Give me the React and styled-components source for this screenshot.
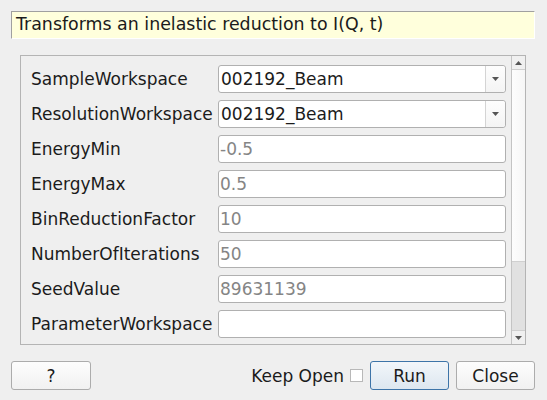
import React from "react";
import styled, { createGlobalStyle } from "styled-components";

const Global = createGlobalStyle`
  html, body { margin: 0; padding: 0; background: #efefef; }
  body { font-family: "DejaVu Sans", "Liberation Sans", sans-serif; font-size: 17px; color: #1b1b1b; }
`;

const Window = styled.div`
  width: 547px;
  height: 400px;
  box-sizing: border-box;
  padding: 11px 12px 0 11px;
  display: flex;
  flex-direction: column;
  background: #efefef;
  overflow: hidden;
`;

const Description = styled.div`
  height: 28px;
  box-sizing: border-box;
  background: #ffffdc;
  border-top: 1px solid #a0a0a0;
  border-left: 1px solid #a0a0a0;
  border-right: 1px solid #ffffff;
  border-bottom: 1px solid #ffffff;
  padding: 0 4px;
  display: flex;
  align-items: center;
  line-height: 1;
  font-size: 17.4px;
  white-space: nowrap;
`;

const Frame = styled.div`
  margin: 16px 9px 0 9px;
  height: 290px;
  box-sizing: border-box;
  border: 1px solid #b4b4b4;
  display: flex;
`;

const Content = styled.div`
  flex: 1;
  padding: 9px 5px 0 10px;
  display: grid;
  grid-template-columns: 181px 1fr;
  column-gap: 6px;
  row-gap: 7px;
  align-content: start;
`;

const Label = styled.div`
  height: 28px;
  display: flex;
  align-items: center;
  white-space: nowrap;
`;

const TextInput = styled.div`
  height: 28px;
  box-sizing: border-box;
  background: #fff;
  border: 1px solid #b0b0b0;
  border-radius: 3px;
  padding: 0 2px 0 1px;
  display: flex;
  align-items: center;
  color: ${(p) => (p.$muted ? "#858585" : "#1b1b1b")};
`;

const Combo = styled.div`
  height: 28px;
  box-sizing: border-box;
  background: #fff;
  border: 1px solid #b0b0b0;
  border-radius: 3px;
  display: flex;
  align-items: stretch;
`;

const ComboText = styled.div`
  flex: 1;
  display: flex;
  align-items: center;
  padding-left: 2px;
`;

const ComboArrow = styled.div`
  width: 19px;
  border-left: 1px solid #d4d4d4;
  display: flex;
  align-items: center;
  justify-content: center;
  background: linear-gradient(#fdfdfd, #f4f4f4);
  border-radius: 0 3px 3px 0;
`;

const Scrollbar = styled.div`
  width: 13px;
  border-left: 1px solid #c4c4c4;
  display: flex;
  flex-direction: column;
  background: #e1e1e1;
`;

const ScrollButton = styled.div`
  height: 13px;
  background: #f0f0f0;
  display: flex;
  align-items: center;
  justify-content: center;
  border-${(p) => (p.$up ? "bottom" : "top")}: 1px solid #cfcfcf;
`;

const ScrollHandle = styled.div`
  height: 191px;
  background: linear-gradient(90deg, #fdfdfd, #f6f6f6);
  border-bottom: 1px solid #d0d0d0;
`;

const ScrollGroove = styled.div`
  flex: 1;
`;

const Footer = styled.div`
  margin-top: 16px;
  display: flex;
  align-items: center;
`;

const Button = styled.div`
  width: ${(p) => p.$w}px;
  height: 29px;
  box-sizing: border-box;
  border: 1px solid ${(p) => (p.$focus ? "#3d74a8" : "#acacac")};
  border-radius: 3px;
  background: ${(p) =>
    p.$focus ? "linear-gradient(#f2f6fa, #dde7f0)" : "linear-gradient(#fdfdfd, #f1f1f1)"};
  display: flex;
  align-items: center;
  justify-content: center;
  color: #1b1b1b;
`;

const Spacer = styled.div`
  flex: 1;
`;

const CheckLabel = styled.span`
  margin-right: 6px;
  white-space: nowrap;
`;

const CheckBox = styled.div`
  width: 13px;
  height: 13px;
  box-sizing: border-box;
  border: 1px solid #b8b8b8;
  background: #fff;
  margin-right: 7px;
`;

const Gap = styled.div`
  width: ${(p) => p.$w}px;
`;

const Tri = ({ up }) => (
  <svg width="7" height="4" viewBox="0 0 7 4">
    <polygon points={up ? "0,4 7,4 3.5,0" : "0,0 7,0 3.5,4"} fill="#555" />
  </svg>
);

const rows = [
  { label: "SampleWorkspace", value: "002192_Beam", combo: true },
  { label: "ResolutionWorkspace", value: "002192_Beam", combo: true },
  { label: "EnergyMin", value: "-0.5", muted: true },
  { label: "EnergyMax", value: "0.5", muted: true },
  { label: "BinReductionFactor", value: "10", muted: true },
  { label: "NumberOfIterations", value: "50", muted: true },
  { label: "SeedValue", value: "89631139", muted: true },
  { label: "ParameterWorkspace", value: "" },
];

export default function App() {
  return (
    <>
      <Global />
      <Window>
        <Description>Transforms an inelastic reduction to I(Q, t)</Description>
        <Frame>
          <Content>
            {rows.map((r) => (
              <React.Fragment key={r.label}>
                <Label>{r.label}</Label>
                {r.combo ? (
                  <Combo>
                    <ComboText>{r.value}</ComboText>
                    <ComboArrow>
                      <Tri />
                    </ComboArrow>
                  </Combo>
                ) : (
                  <TextInput $muted={r.muted}>{r.value}</TextInput>
                )}
              </React.Fragment>
            ))}
          </Content>
          <Scrollbar>
            <ScrollButton $up>
              <Tri up />
            </ScrollButton>
            <ScrollHandle />
            <ScrollGroove />
            <ScrollButton>
              <Tri />
            </ScrollButton>
          </Scrollbar>
        </Frame>
        <Footer>
          <Button $w={80}>?</Button>
          <Spacer />
          <CheckLabel>Keep Open</CheckLabel>
          <CheckBox />
          <Button $w={79} $focus>
            Run
          </Button>
          <Gap $w={7} />
          <Button $w={79}>Close</Button>
        </Footer>
      </Window>
    </>
  );
}
